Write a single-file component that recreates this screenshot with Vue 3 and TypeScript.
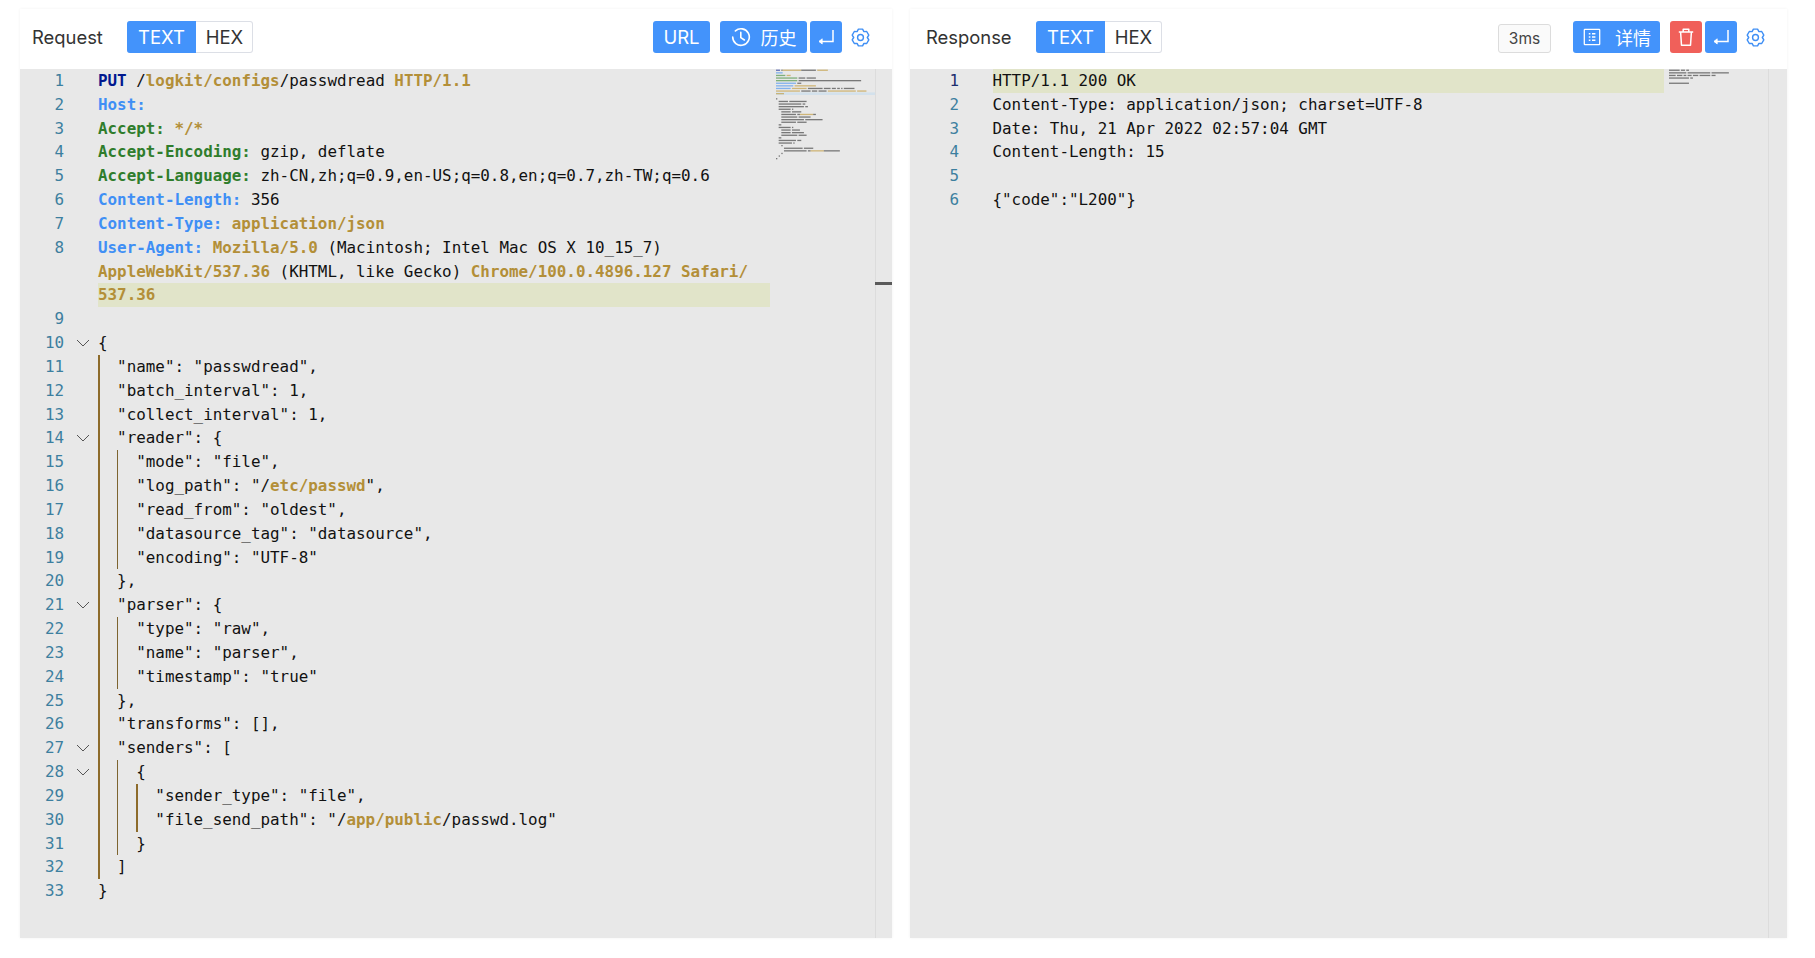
<script setup lang="ts">
type Seg = [string, string]
interface Row { n: number | null; fold: boolean; guides: number; segs: Seg[]; hl: boolean }

const p = (s: string): Seg => ['', s]
const t = (s: string): Seg => ['t', s]

function build(raw: { g?: number; fold?: boolean; cont?: boolean; hl?: boolean; segs: Seg[] }[]): Row[] {
  let n = 0
  return raw.map((r) => ({
    n: r.cont ? null : ++n,
    fold: !!r.fold,
    guides: r.g ?? 0,
    segs: r.segs,
    hl: !!r.hl,
  }))
}

const j = (g: number, s: string, fold = false) => ({ g, fold, segs: [p(s)] })

const requestRows = build([
  { segs: [['m', 'PUT'], p(' /'), t('logkit/configs'), p('/passwdread '), t('HTTP/1.1')] },
  { segs: [['k', 'Host:']] },
  { segs: [['g', 'Accept:'], p(' '), t('*/*')] },
  { segs: [['g', 'Accept-Encoding:'], p(' gzip, deflate')] },
  { segs: [['g', 'Accept-Language:'], p(' zh-CN,zh;q=0.9,en-US;q=0.8,en;q=0.7,zh-TW;q=0.6')] },
  { segs: [['k', 'Content-Length:'], p(' 356')] },
  { segs: [['k', 'Content-Type:'], p(' '), t('application/json')] },
  { segs: [['k', 'User-Agent:'], p(' '), t('Mozilla/5.0'), p(' (Macintosh; Intel Mac OS X 10_15_7)')] },
  { cont: true, segs: [t('AppleWebKit/537.36'), p(' (KHTML, like Gecko) '), t('Chrome/100.0.4896.127 Safari/')] },
  { cont: true, hl: true, segs: [t('537.36')] },
  { segs: [] },
  j(0, '{', true),
  j(1, '"name": "passwdread",'),
  j(1, '"batch_interval": 1,'),
  j(1, '"collect_interval": 1,'),
  j(1, '"reader": {', true),
  j(2, '"mode": "file",'),
  { g: 2, segs: [p('"log_path": "/'), t('etc/passwd'), p('",')] },
  j(2, '"read_from": "oldest",'),
  j(2, '"datasource_tag": "datasource",'),
  j(2, '"encoding": "UTF-8"'),
  j(1, '},'),
  j(1, '"parser": {', true),
  j(2, '"type": "raw",'),
  j(2, '"name": "parser",'),
  j(2, '"timestamp": "true"'),
  j(1, '},'),
  j(1, '"transforms": [],'),
  j(1, '"senders": [', true),
  j(2, '{', true),
  j(3, '"sender_type": "file",'),
  { g: 3, segs: [p('"file_send_path": "/'), t('app/public'), p('/passwd.log"')] },
  j(2, '}'),
  j(1, ']'),
  j(0, '}'),
])

const responseRows = build([
  { hl: true, segs: [p('HTTP/1.1 200 OK')] },
  { segs: [p('Content-Type: application/json; charset=UTF-8')] },
  { segs: [p('Date: Thu, 21 Apr 2022 02:57:04 GMT')] },
  { segs: [p('Content-Length: 15')] },
  { segs: [] },
  { segs: [p('{"code":"L200"}')] },
])

const miniColors: Record<string, string> = {
  '': '#3c3c3c',
  k: '#4a94f0',
  g: '#46903f',
  t: '#c29a3a',
  m: '#1c2f9a',
}

// The overview ruler on the right is a scaled picture of the text: one bar per word.
function minimap(rows: Row[]) {
  const bars: { x: number; y: number; w: number; c: string }[] = []
  rows.forEach((row, i) => {
    let col = row.guides * 2
    for (const [cls, text] of row.segs) {
      const re = /\S+/g
      let m: RegExpExecArray | null
      while ((m = re.exec(text))) {
        bars.push({
          x: (col + m.index) * 1.33,
          y: i * 2.6 + 0.6,
          w: m[0].length * 1.33,
          c: miniColors[cls],
        })
      }
      col += text.length
    }
  })
  return bars
}

// Six-toothed gear outline, centred on (12, 12).
function gearPath(): string {
  const pt = (deg: number, r: number) => {
    const a = (deg * Math.PI) / 180
    return `${(12 + r * Math.cos(a)).toFixed(2)} ${(12 + r * Math.sin(a)).toFixed(2)}`
  }
  const parts: string[] = []
  for (let k = 0; k < 6; k++) {
    const c = -90 + 60 * k
    parts.push(pt(c - 30, 8.6), pt(c - 14, 10.9), pt(c + 14, 10.9))
  }
  return 'M' + parts.join('L') + 'Z'
}
const gear = gearPath()

const panels = [
  { id: 'req', title: 'Request', rows: requestRows, bars: minimap(requestRows), miniHl: 9, marker: true },
  { id: 'res', title: 'Response', rows: responseRows, bars: minimap(responseRows), miniHl: -1, marker: false },
]
</script>

<template>
  <div class="page">
    <section v-for="panel in panels" :key="panel.id" class="panel" :class="panel.id">
      <header class="bar">
        <span class="title">{{ panel.title }}</span>
        <div class="seg">
          <button class="seg-on">TEXT</button>
          <button class="seg-off">HEX</button>
        </div>
        <div class="spacer"></div>

        <template v-if="panel.id === 'req'">
          <button class="btn url">URL</button>
          <button class="btn hist">
            <svg class="ico" viewBox="0 0 20 20" fill="none" stroke="#fff" stroke-width="1.6" stroke-linecap="round">
              <path d="M4.4 3.9A8.3 8.3 0 1 1 1.7 10" />
              <path d="M9.8 5.4v5.2l3.6 2.4" />
            </svg>
            <span class="cjk">历史</span>
          </button>
        </template>
        <template v-else>
          <span class="time">3ms</span>
          <button class="btn detail">
            <svg class="ico" viewBox="0 0 20 20" fill="none" stroke="#fff" stroke-width="1.3">
              <rect x="2.3" y="2.3" width="15.4" height="15.4" rx="0.6" />
              <path d="M6.8 6.8h1.6M10 6.8h3.4M6.8 10h1.6M10 10h3.4M6.8 13.2h1.6M10 13.2h3.4" stroke-width="1.5" />
            </svg>
            <span class="cjk">详情</span>
          </button>
          <button class="btn del" aria-label="delete">
            <svg class="ico" viewBox="0 0 20 20" fill="none" stroke="#fff" stroke-width="1.5" stroke-linejoin="round">
              <path d="M2.8 5h14.4M7.2 5V2.2h5.6V5M4.6 5l.9 13.2h9l.9-13.2" />
            </svg>
          </button>
        </template>

        <button class="btn wrap" aria-label="wrap">
          <svg class="ico" viewBox="0 0 20 20" fill="none" stroke="#fff" stroke-width="1.5">
            <path d="M17 3v11.4H3.4" />
            <path d="M3 14.4l3.2-2.6v5.2z" fill="#fff" stroke-width="0.8" />
          </svg>
        </button>
        <button class="gear" aria-label="settings">
          <svg viewBox="0 0 24 24" width="19" height="19" fill="none" stroke="#3f8ff5" stroke-width="1.8" stroke-linejoin="round">
            <path :d="gear" />
            <circle cx="12" cy="12" r="3.7" />
          </svg>
        </button>
      </header>

      <div class="editor">
        <div class="lines">
          <div v-for="(row, i) in panel.rows" :key="i" class="row">
            <span class="ln" :class="{ active: panel.id === 'res' && row.n === 1 }">{{ row.n }}</span>
            <span class="fold">
              <svg v-if="row.fold" viewBox="0 0 14 8" width="14" height="8" fill="none" stroke="#555" stroke-width="1">
                <path d="M1 1l6 6 6-6" />
              </svg>
            </span>
            <div class="code" :class="{ hl: row.hl }">
              <span v-for="g in row.guides" :key="g" class="guide"></span>
              <span v-for="(s, k) in row.segs" :key="k" :class="'tk-' + (s[0] || 'p')">{{ s[1] }}</span>
            </div>
          </div>
        </div>
        <svg class="mini" width="99" height="869">
          <rect v-if="panel.miniHl >= 0" x="0" :y="panel.miniHl * 2.6" width="99" height="2.6" fill="#d3e1ec" />
          <rect v-for="(b, i) in panel.bars" :key="i" :x="b.x" :y="b.y" :width="b.w" height="1.3" :fill="b.c" opacity="0.65" />
        </svg>
        <div class="scroll">
          <span v-if="panel.marker" class="marker"></span>
        </div>
      </div>
    </section>
  </div>
</template>

<style>
html, body { background: #fff; }
</style>

<style scoped>
.page {
  display: flex;
  gap: 18px;
  height: 958px;
  box-sizing: border-box;
  padding: 9px 28px 20px 20px;
  font-family: Inter, "Noto Sans", "Noto Sans CJK SC", sans-serif;
  overflow: hidden;
}
.panel {
  display: flex;
  flex-direction: column;
  background: #fff;
  box-shadow: 0 0 3px rgba(0, 0, 0, 0.06);
}
.panel.req { width: 872px; }
.panel.res { width: 877px; }

.bar {
  display: flex;
  align-items: center;
  height: 60px;
  box-sizing: border-box;
  padding-bottom: 4px;
  padding-right: 13px;
  flex: none;
}
.res .bar { padding-right: 14px; }
.title {
  font-size: 18.4px;
  color: #333;
  margin-left: 12px;
  width: 95px;
}
.res .title { margin-left: 16px; width: 110px; }
.seg {
  display: flex;
  height: 32px;
  border-radius: 3px;
  overflow: hidden;
  box-shadow: inset 0 0 0 1px #dcdfe6;
}
.seg button {
  border: 0;
  padding: 0;
  font: inherit;
  font-size: 18.5px;
  background: none;
}
.seg-on { width: 69px; background: #4393fb !important; color: #fff; }
.seg-off { width: 57px; color: #333; }
.spacer { flex: 1; }

.btn {
  display: flex;
  align-items: center;
  justify-content: center;
  height: 32px;
  border: 0;
  border-radius: 3px;
  background: #4393fb;
  color: #fff;
  font: inherit;
  font-size: 18.5px;
  padding: 0;
}
.ico { width: 20px; height: 20px; flex: none; }
.cjk { font-family: "Noto Sans CJK SC", sans-serif; font-size: 18px; }
.url { width: 57px; margin-right: 10px; }
.hist { width: 87px; gap: 10px; margin-right: 3px; }
.wrap { width: 32px; }
.gear {
  display: flex;
  align-items: center;
  justify-content: center;
  width: 37px;
  height: 32px;
  border: 0;
  padding: 0;
  background: none;
}
.res .gear { width: 36px; }
.time {
  width: 53px;
  height: 29px;
  margin-right: 22px;
  margin-top: 3px;
  box-sizing: border-box;
  display: flex;
  align-items: center;
  justify-content: center;
  border: 1px solid #dcdcdc;
  border-radius: 3px;
  background: #fafafa;
  font-size: 15.5px;
  color: #444;
}
.detail { width: 87px; gap: 13px; margin-right: 10px; }
.del { width: 32px; background: #f0605a; margin-right: 3px; }

.editor {
  display: flex;
  flex: 1;
  min-height: 0;
  background: #e8e8e8;
  font-family: "DejaVu Sans Mono", monospace;
  font-size: 15.88px;
  color: #111;
}
.lines { flex: 1; min-width: 0; }
.row {
  display: flex;
  height: 23.83px;
  line-height: 23.83px;
}
.ln {
  width: 44px;
  flex: none;
  text-align: right;
  color: #3d7f9f;
}
.res .ln { width: 49px; }
.ln.active { color: #1c2f6f; }
.fold {
  width: 34px;
  flex: none;
  display: flex;
  align-items: center;
  justify-content: center;
  padding-left: 4px;
  box-sizing: border-box;
}
.res .fold { width: 33.5px; }
.code {
  flex: 1;
  min-width: 0;
  white-space: pre;
  display: flex;
}
.code.hl { background: #e1e4c9; }
.guide {
  flex: none;
  width: 2ch;
  box-sizing: border-box;
  border-left: 2px solid #8d6b2b;
}
.guide:nth-child(2) { border-left: 1px solid #7d6430; }
.tk-p { font-weight: 400; }
.tk-k { color: #3f8ff5; font-weight: 700; }
.tk-g { color: #2f7d2c; font-weight: 700; }
.tk-t { color: #b38f38; font-weight: 700; }
.tk-m { color: #00188f; font-weight: 700; }

.mini {
  flex: none;
  margin-left: 6px;
  display: block;
}
.res .mini { margin-left: 5px; }
.scroll {
  position: relative;
  flex: none;
  width: 17px;
  box-sizing: border-box;
  border-left: 1px solid #dcdcdc;
}
.res .scroll { width: 19px; }
.marker {
  position: absolute;
  left: -1px;
  right: 0;
  top: 213px;
  height: 3px;
  background: #5a5a5a;
}
</style>
